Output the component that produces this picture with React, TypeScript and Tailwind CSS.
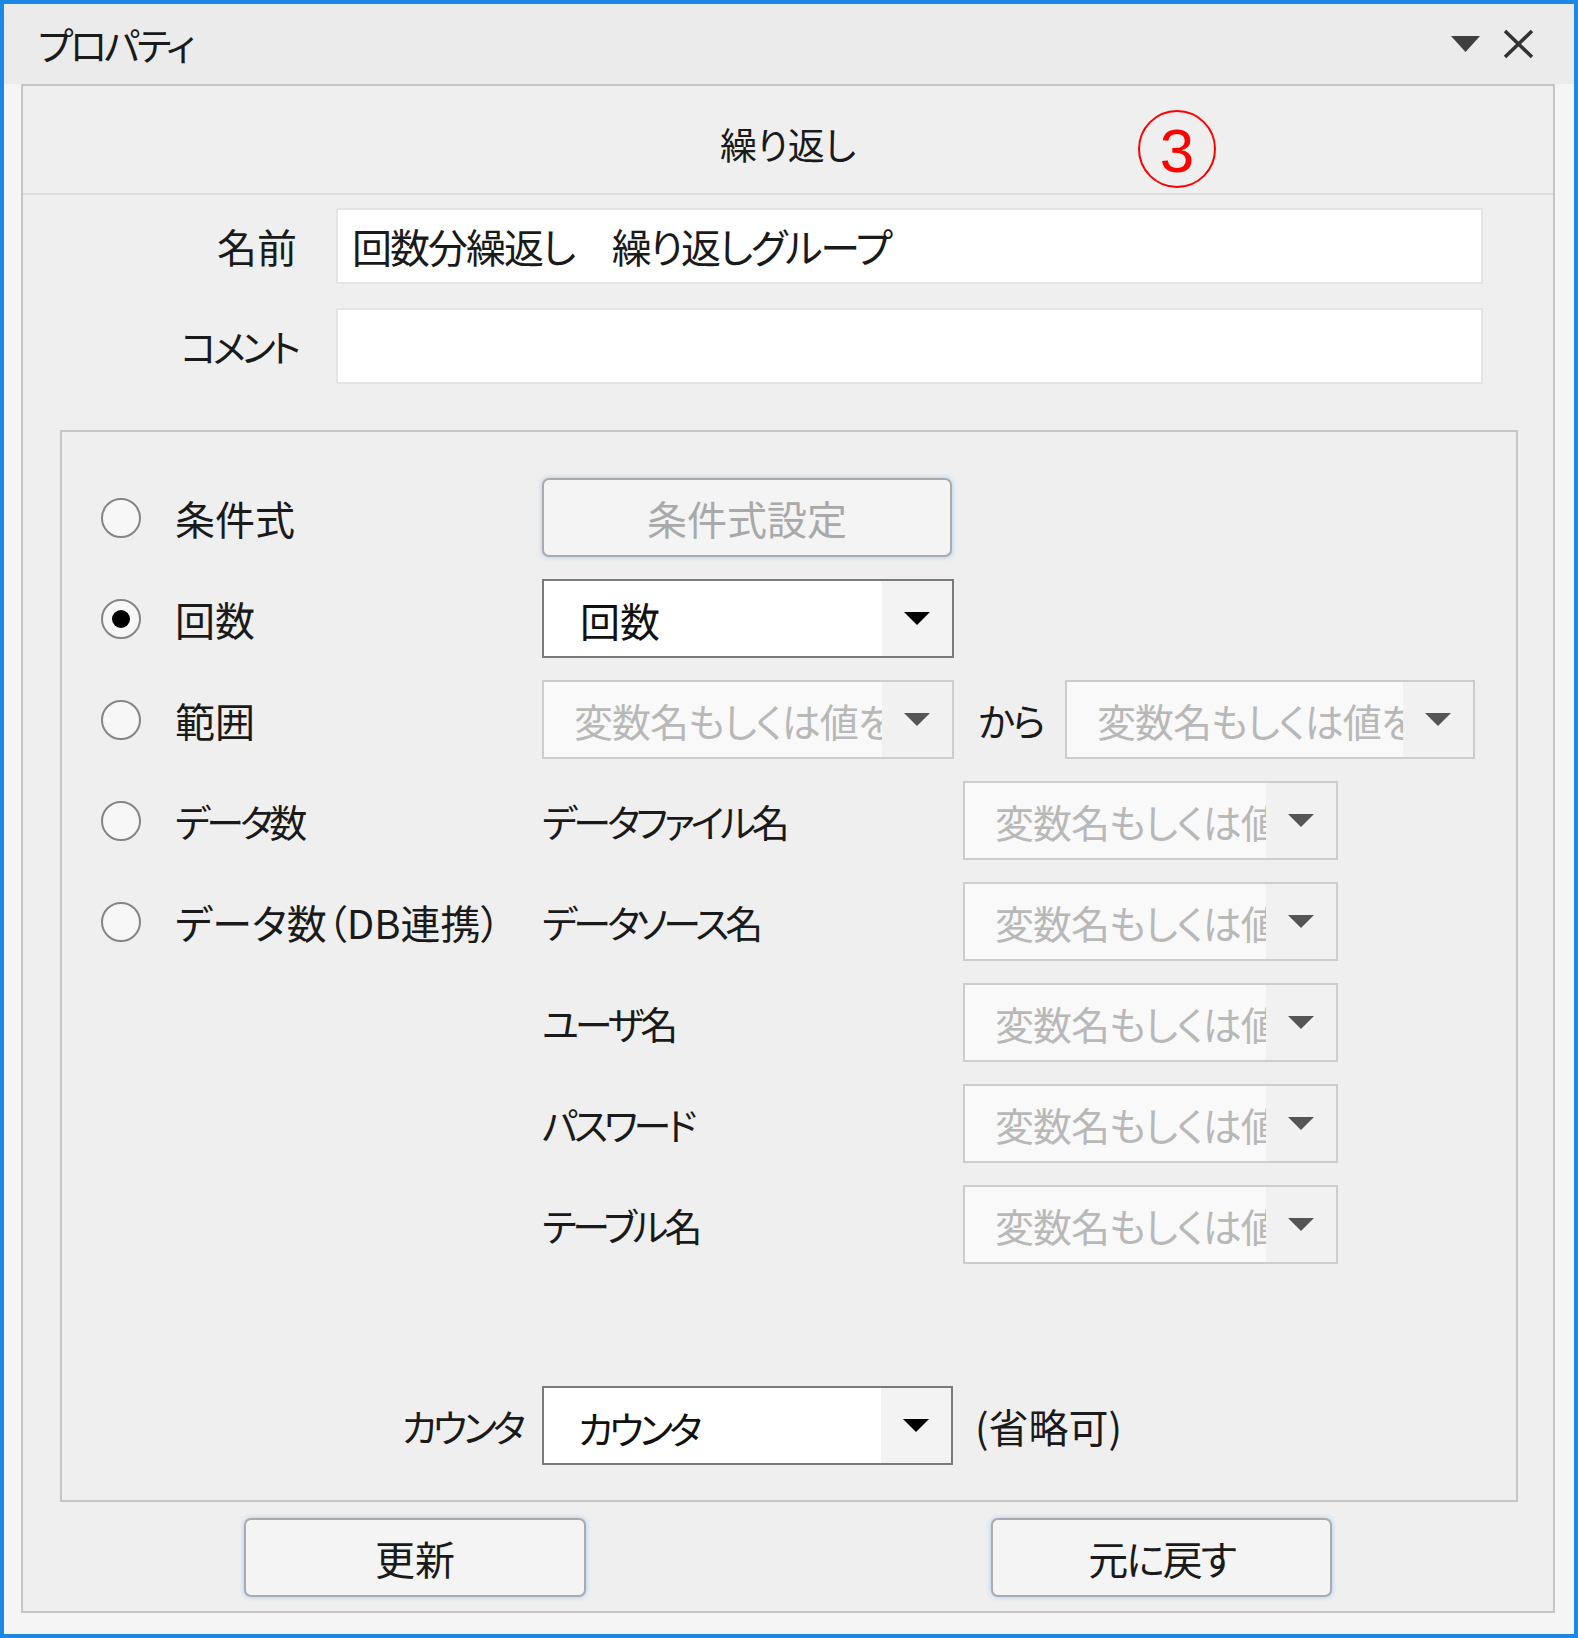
import clsx from "clsx";

// Meiryo UI の仮名は詰まっているので、仮名の多い文字列は少し詰める
const kana = "text-[38px] tracking-[-4px]";

function Caret({ dim }: { dim?: boolean }) {
  return (
    <svg width="26" height="13" viewBox="0 0 26 13">
      <path d="M0 0 H26 L13 13 Z" fill={dim ? "#555555" : "#000000"} />
    </svg>
  );
}

function Combo({
  value,
  disabled,
  className,
}: {
  value: string;
  disabled?: boolean;
  className: string;
}) {
  return (
    <div
      className={clsx(
        "flex h-[79px] shrink-0 border-2",
        disabled ? "border-[#cdcdcd] bg-[#f9f9f9]" : "border-[#7b7b7b] bg-white",
        className,
      )}
    >
      <div
        className={clsx(
          "flex-1 overflow-hidden whitespace-nowrap pt-[19px]",
          disabled
            ? "pl-[30px] text-[39px] tracking-[-1px] text-[#b8b8b8]"
            : "pl-[36px] text-[#111]",
        )}
      >
        {value}
      </div>
      <div
        className={clsx(
          "flex w-[70px] items-center justify-center",
          disabled ? "bg-[#f1f1f1]" : "bg-[#f3f3f3]",
        )}
      >
        <Caret dim={disabled} />
      </div>
    </div>
  );
}

function Radio({
  checked,
  label,
  tight,
}: {
  checked?: boolean;
  label: string;
  tight?: boolean;
}) {
  return (
    <div className="flex w-[480px] shrink-0 items-center">
      <span className="ml-[39px] flex h-[40px] w-[40px] items-center justify-center rounded-full border-2 border-[#858585] bg-[#f7f7f7]">
        {checked && <span className="h-[18px] w-[18px] rounded-full bg-black" />}
      </span>
      <span className={clsx("ml-[34px] whitespace-nowrap", tight && kana)}>
        {label}
      </span>
    </div>
  );
}

function Btn({
  children,
  dim,
  className,
}: {
  children: React.ReactNode;
  dim?: boolean;
  className?: string;
}) {
  return (
    <button
      className={clsx(
        "flex h-[79px] items-center justify-center rounded-[7px] border-2 border-[#ababab] bg-[#f4f4f4] shadow-[0_0_5px_#9fcbf3]",
        dim ? "text-[#a9a9a9]" : "text-[#1a1a1a]",
        className,
      )}
    >
      {children}
    </button>
  );
}

const placeholder = "変数名もしくは値を入力";

export default function App() {
  return (
    <div className="flex h-[1638px] w-[1578px] flex-col border-4 border-[#1d87e4] bg-[#f5f5f5] font-['Noto_Sans_CJK_JP',sans-serif] text-[40px] leading-none text-[#1a1a1a] [font-feature-settings:'palt']">
      {/* title bar */}
      <div className="flex h-[80px] shrink-0 items-center bg-[#ebebeb] pl-[34px] pr-[40px]">
        <span className="text-[38px] tracking-[-3px]">プロパティ</span>
        <div className="ml-auto flex items-center gap-[23px]">
          <svg width="29" height="16" viewBox="0 0 29 16">
            <path d="M0 0 H29 L14.5 16 Z" fill="#3f3f3f" />
          </svg>
          <svg width="31" height="30" viewBox="0 0 31 30">
            <path d="M2 2 L29 28 M29 2 L2 28" stroke="#333" strokeWidth="3.5" />
          </svg>
        </div>
      </div>

      <div className="flex flex-1 flex-col pb-[21px] pl-[17px] pr-[19px]">
        <div className="flex flex-1 flex-col border-2 border-[#c5c5c5] bg-[#efefef]">
          {/* header */}
          <div className="relative flex h-[109px] shrink-0 items-center justify-center border-b-2 border-[#dddddd] pt-[10px] text-[37px]">
            繰り返し
            <span className="absolute left-[1115px] top-[24px] flex h-[78px] w-[78px] items-center justify-center rounded-full border-2 border-[#ff0000] pt-[4px] font-['Liberation_Sans',sans-serif] text-[62px] text-[#ff0000]">
              3
            </span>
          </div>

          {/* name / comment */}
          <div className="flex flex-col gap-[24px] pt-[13px]">
            <div className="flex items-center">
              <span className="w-[274px] text-right">名前</span>
              <div className="ml-[39px] flex h-[76px] w-[1147px] items-center border-2 border-[#e4e4e4] bg-white pl-[14px] tracking-[-2px]">
                回数分繰返し　繰り返しグループ
              </div>
            </div>
            <div className="flex items-center">
              <span className={clsx("w-[274px] text-right", kana)}>コメント</span>
              <div className="ml-[39px] h-[76px] w-[1147px] border-2 border-[#e4e4e4] bg-white" />
            </div>
          </div>

          {/* group box */}
          <div className="ml-[37px] mr-[35px] mt-[46px] flex h-[1072px] shrink-0 flex-col border-2 border-[#c6c6c6] pt-[46px]">
            <div className="flex flex-col gap-[22px]">
              <div className="flex h-[79px] items-center">
                <Radio label="条件式" />
                <Btn dim className="w-[410px]">
                  条件式設定
                </Btn>
              </div>
              <div className="flex h-[79px] items-center">
                <Radio checked label="回数" />
                <Combo value="回数" className="w-[412px]" />
              </div>
              <div className="flex h-[79px] items-center">
                <Radio label="範囲" />
                <Combo value={placeholder} disabled className="w-[412px]" />
                <span className="ml-[24px] w-[87px] shrink-0 whitespace-nowrap text-[38px] tracking-[-2px]">
                  から
                </span>
                <Combo value={placeholder} disabled className="w-[410px]" />
              </div>
              <div className="flex h-[79px] items-center">
                <Radio tight label="データ数" />
                <span className={clsx("w-[421px] shrink-0", kana)}>データファイル名</span>
                <Combo value={placeholder} disabled className="w-[375px]" />
              </div>
              <div className="flex h-[79px] items-center">
                <Radio label="データ数（DB連携）" />
                <span className={clsx("w-[421px] shrink-0", kana)}>データソース名</span>
                <Combo value={placeholder} disabled className="w-[375px]" />
              </div>
              {["ユーザ名", "パスワード", "テーブル名"].map((l) => (
                <div key={l} className="flex h-[79px] items-center">
                  <div className="w-[480px] shrink-0" />
                  <span className={clsx("w-[421px] shrink-0", kana)}>{l}</span>
                  <Combo value={placeholder} disabled className="w-[375px]" />
                </div>
              ))}
            </div>

            <div className="mt-[122px] flex h-[79px] items-center">
              <span className={clsx("w-[460px] shrink-0 text-right", kana)}>カウンタ</span>
              <div className="ml-[20px] flex h-[79px] w-[411px] shrink-0 border-2 border-[#7b7b7b] bg-white">
                <div className={clsx("flex-1 pl-[34px] pt-[21px] text-[#111]", kana)}>
                  カウンタ
                </div>
                <div className="flex w-[70px] items-center justify-center bg-[#f3f3f3]">
                  <Caret />
                </div>
              </div>
              <span className="ml-[22px]">(省略可)</span>
            </div>
          </div>

          {/* buttons */}
          <div className="mt-[16px] flex">
            <Btn className="ml-[221px] w-[342px]">更新</Btn>
            <Btn className="ml-[405px] w-[341px]">
              <span className="tracking-[-2px]">元に戻す</span>
            </Btn>
          </div>
        </div>
      </div>
    </div>
  );
}
